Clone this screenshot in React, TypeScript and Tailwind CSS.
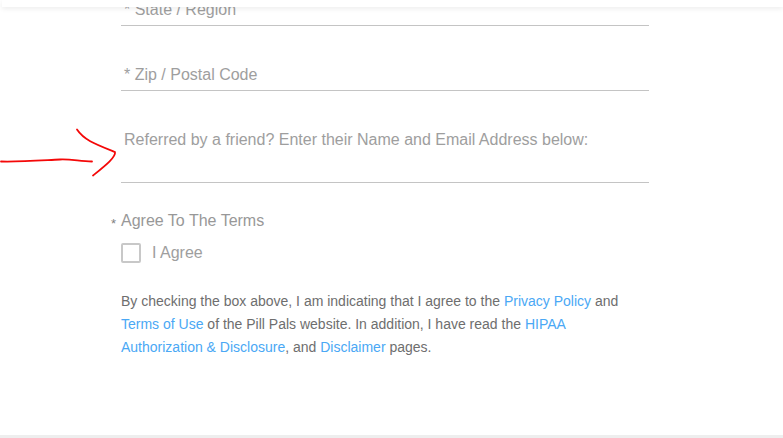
const linkClass = 'text-[#4aa8f5]'

function Field({ label, className }: { label: string; className: string }) {
  return (
    <div className={`w-[528px] border-b border-[#c4c4c4] pl-[3px] text-[16px] text-[#9e9e9e] ${className}`}>
      {label}
    </div>
  )
}

export default function App() {
  return (
    <div className="relative h-[438px] w-[783px] overflow-hidden bg-white font-['Liberation_Sans',Arial,sans-serif]">
      <header className="absolute left-[2px] right-0 top-0 z-10 h-[7px] bg-white shadow-[0_2px_5px_rgba(0,0,0,0.07)]" />

      <main className="pl-[121px]">
        <div className="-mt-[5px] flex flex-col">
          <Field label="* State / Region" className="h-[31px] leading-[29px]" />
          <Field label="* Zip / Postal Code" className="mt-[33px] h-[32px] leading-[31px]" />
          <Field
            label="Referred by a friend? Enter their Name and Email Address below:"
            className="mt-[36px] h-[56px] leading-[26px]"
          />
        </div>

        <div className="relative mt-[26px] text-[16px] leading-[24px] text-[#989898]">
          <span className="absolute -left-[10px] top-[3px] text-[13px] text-[#808080]">*</span>
          Agree To The Terms
        </div>

        <label className="mt-[8px] flex items-center gap-[11px] text-[16px] text-[#9e9e9e]">
          <span className="h-[20px] w-[20px] rounded-[2px] border-2 border-[#c8c8c8] bg-white" />
          I Agree
        </label>

        <p className="mt-[25px] w-[528px] text-[14px] leading-[23px] text-[#6e6e6e]">
          By checking the box above, I am indicating that I agree to the{' '}
          <a className={linkClass}>Privacy Policy</a> and <a className={linkClass}>Terms of Use</a> of the Pill Pals
          website. In addition, I have read the <a className={linkClass}>HIPAA Authorization &amp; Disclosure</a>, and{' '}
          <a className={linkClass}>Disclaimer</a> pages.
        </p>
      </main>

      {/* hand drawn arrow on top of the screenshot */}
      <svg className="absolute left-0 top-[120px]" width="130" height="65" viewBox="0 0 130 65" fill="none">
        <path
          d="M1 41.5 C20 42 40 40.5 60 39.5 C72 39 80 41.5 92 41.5"
          stroke="#f40808"
          strokeWidth="1.8"
          strokeLinecap="round"
        />
        <path
          d="M77 9.5 C84 20 95 24 115 32 C116 37 106 45 93 55.5"
          stroke="#f40808"
          strokeWidth="1.8"
          strokeLinecap="round"
          strokeLinejoin="round"
        />
      </svg>

      <footer className="absolute bottom-0 left-0 right-0 h-[3px] bg-[#eeeeee]" />
    </div>
  )
}
